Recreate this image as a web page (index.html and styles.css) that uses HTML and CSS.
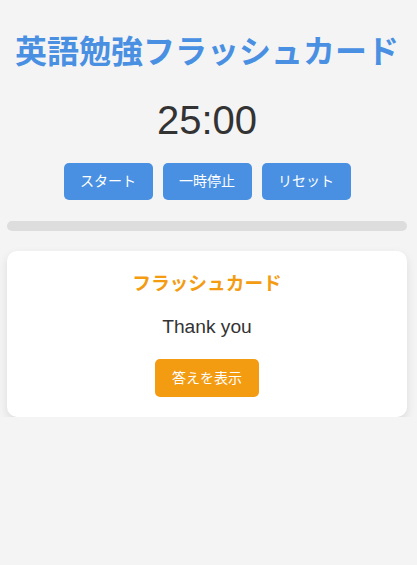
FILE: index.html
```html
<!DOCTYPE html>
<html lang="ja">
<head>
    <meta charset="UTF-8">
    <meta name="viewport" content="width=device-width, initial-scale=1.0">
    <title>英語勉強フラッシュカード</title>
    <link rel="stylesheet" href="styles.css">
</head>
<body>
    <div class="container">
        <h1>英語勉強フラッシュカード</h1>
        <div class="timer" id="timer">25:00</div>
        <div class="controls">
            <button class="btn">スタート</button>
            <button class="btn">一時停止</button>
            <button class="btn">リセット</button>
        </div>
        <div class="progress"><div class="progress-fill"></div></div>

        <div class="card">
            <h3>フラッシュカード</h3>
            <p class="word">Thank you</p>
            <button class="btn answer">答えを表示</button>
        </div>
    </div>
</body>
</html>
```

FILE: styles.css
```css
* {
    box-sizing: border-box;
}

body {
    margin: 0;
    background: #f4f4f4;
    font-family: "Liberation Sans", "Noto Sans CJK JP", sans-serif;
    color: #333;
    text-align: center;
}

.container {
    width: 400px;
    margin-left: 7px;
}

h1 {
    margin: 30px 0 0;
    font-size: 32px;
    line-height: 44px;
    white-space: nowrap;
    color: #4a90e2;
}

.timer {
    margin-top: 22px;
    font-size: 40px;
    line-height: 48px;
}

.controls {
    display: flex;
    justify-content: center;
    gap: 10px;
    margin-top: 19px;
}

.btn {
    padding: 10px 16.5px;
    border: none;
    border-radius: 5px;
    background: #4a90e2;
    color: white;
    font-family: inherit;
    font-size: 14px;
    line-height: 17px;
    cursor: pointer;
}

.progress {
    margin-top: 21px;
    height: 10px;
    border-radius: 5px;
    background: #ddd;
    overflow: hidden;
}

.progress-fill {
    width: 0;
    height: 100%;
    background: #4a90e2;
}

.card {
    margin-top: 20px;
    padding: 20px;
    background: white;
    border-radius: 10px;
    box-shadow: 0 4px 10px rgba(0, 0, 0, 0.1);
}

.card h3 {
    margin: 0;
    font-size: 18.72px;
    line-height: 26px;
    color: #f39c12;
}

.word {
    margin: 18px 0 20px;
    font-size: 19.2px;
    line-height: 24px;
}

.answer {
    background: #f39c12;
    padding: 10px 17px;
    line-height: 18px;
}
```
